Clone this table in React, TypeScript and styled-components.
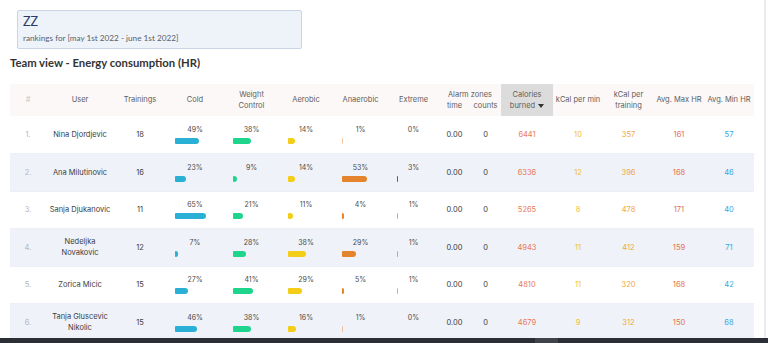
import React from 'react'
import styled, { createGlobalStyle } from 'styled-components'

const GlobalStyle = createGlobalStyle`
  html, body {
    margin: 0;
    padding: 0;
    background: #ffffff;
  }
  body {
    font-family: Lato, "Liberation Sans", sans-serif;
    overflow: hidden;
  }
`

const zoneColors = ['#2bb0d5', '#1fd58e', '#f4cd19', '#e4852d', '#d8234a']

type Row = {
  name: string
  trainings: number
  zones: number[]
  time: string
  counts: number
  calories: number
  perMin: number
  perTraining: number
  maxHr: number
  minHr: number
}

const rows: Row[] = [
  { name: 'Nina Djordjevic', trainings: 18, zones: [49, 38, 14, 1, 0], time: '0.00', counts: 0, calories: 6441, perMin: 10, perTraining: 357, maxHr: 161, minHr: 57 },
  { name: 'Ana Milutinovic', trainings: 16, zones: [23, 9, 14, 53, 3], time: '0.00', counts: 0, calories: 6336, perMin: 12, perTraining: 396, maxHr: 168, minHr: 46 },
  { name: 'Sanja Djukanovic', trainings: 11, zones: [65, 21, 11, 4, 1], time: '0.00', counts: 0, calories: 5265, perMin: 8, perTraining: 478, maxHr: 171, minHr: 40 },
  { name: 'Nedeljka Novakovic', trainings: 12, zones: [7, 28, 38, 29, 1], time: '0.00', counts: 0, calories: 4943, perMin: 11, perTraining: 412, maxHr: 159, minHr: 71 },
  { name: 'Zorica Micic', trainings: 15, zones: [27, 41, 29, 5, 1], time: '0.00', counts: 0, calories: 4810, perMin: 11, perTraining: 320, maxHr: 168, minHr: 42 },
  { name: 'Tanja Gluscevic Nikolic', trainings: 15, zones: [46, 38, 16, 1, 0], time: '0.00', counts: 0, calories: 4679, perMin: 9, perTraining: 312, maxHr: 150, minHr: 68 },
]

const colWidths = [36, 68, 52, 58, 55, 54, 55, 51, 31, 31, 52, 50, 51, 50, 50]

const Page = styled.div`
  display: flex;
  width: 768px;
  height: 343px;
  overflow: hidden;
`
const Main = styled.div`
  flex: 1;
  min-width: 0;
  padding: 10px 0 0 10px;
`
const Gutter = styled.div`
  width: 2px;
  border-left: 2px solid #ebebeb;
`
const InfoBox = styled.div`
  box-sizing: border-box;
  width: 285px;
  height: 39px;
  margin-left: 7px;
  padding: 3px 5px 0;
  background: #eef3fa;
  border: 1px solid #c9d5e4;
  border-radius: 2px;
`
const TeamName = styled.div`
  font-size: 12.5px;
  line-height: 16px;
  color: #2c3c69;
`
const RangeText = styled.div`
  margin-top: 3px;
  font-size: 8.2px;
  line-height: 10px;
  color: #5a5f68;
`
const Title = styled.div`
  margin-top: 6px;
  font-size: 11.3px;
  line-height: 15px;
  font-weight: 700;
  color: #333333;
`
const Table = styled.table`
  margin-top: 14px;
  width: 744px;
  table-layout: fixed;
  border-collapse: collapse;
  font-family: Inter, "Liberation Sans", sans-serif;
  font-size: 7.5px;
`
const HeadRow = styled.tr`
  height: 16px;
  background: #fcf8f7;
`
const Th = styled.th<{ $active?: boolean; $align?: 'top' | 'bottom' | 'middle' }>`
  padding: 0 1px;
  font-weight: 400;
  line-height: 11.5px;
  color: #5e5e5e;
  text-align: center;
  vertical-align: ${p => p.$align || 'middle'};
  background: ${p => (p.$active ? '#dcdcdc' : 'transparent')};
`
const BodyRow = styled.tr<{ $shaded: boolean }>`
  height: 37.5px;
  background: ${p => (p.$shaded ? '#eff2f8' : '#ffffff')};
  border-bottom: 1px solid #eceff5;
`
const Td = styled.td<{ $color?: string }>`
  padding: 0 3px;
  text-align: center;
  vertical-align: middle;
  line-height: 11px;
  color: ${p => p.$color || '#3d3d3d'};
`
const IndexCell = styled(Td)`
  color: #b8b8b8;
`
const PctLabel = styled.div`
  font-size: 7px;
  line-height: 9px;
  color: #4a4a4a;
  text-align: center;
`
const Bar = styled.div<{ $color: string }>`
  height: 6px;
  margin: 4px 0 0 6px;
  border-radius: 1px 3px 3px 1px;
  background: ${p => p.$color};
`
const SortArrow = styled.svg`
  width: 6px;
  height: 4px;
  margin-left: 3px;
  vertical-align: middle;
`
const TaskBar = styled.div`
  position: fixed;
  left: 0;
  right: 0;
  bottom: 0;
  height: 5px;
  padding-left: 535px;
  background: #2b2e34;
`
const TaskItem = styled.div`
  width: 23px;
  height: 5px;
  background: #40434a;
`

const ZoneCell: React.FC<{ pct: number; color: string }> = ({ pct, color }) => {
  const w = pct * 0.48
  const style = pct === 0 ? { width: 0 } : w < 1 ? { width: 1, opacity: 0.45 } : { width: w }
  return (
    <Td>
      <PctLabel>{pct}%</PctLabel>
      <Bar $color={color} style={style} />
    </Td>
  )
}

const App: React.FC = () => {
  return (
    <Page>
      <GlobalStyle />
      <Main>
        <InfoBox>
          <TeamName>ZZ</TeamName>
          <RangeText>rankings for [may 1st 2022 - june 1st 2022]</RangeText>
        </InfoBox>
        <Title>Team view - Energy consumption (HR)</Title>
        <Table>
          <colgroup>
            {colWidths.map((w, i) => (
              <col key={i} style={{ width: w }} />
            ))}
          </colgroup>
          <thead>
            <HeadRow>
              <Th rowSpan={2} style={{ color: '#c4c4c4' }}>#</Th>
              <Th rowSpan={2}>User</Th>
              <Th rowSpan={2}>Trainings</Th>
              <Th rowSpan={2}>Cold</Th>
              <Th rowSpan={2}>Weight<br />Control</Th>
              <Th rowSpan={2}>Aerobic</Th>
              <Th rowSpan={2}>Anaerobic</Th>
              <Th rowSpan={2}>Extreme</Th>
              <Th colSpan={2} $align="bottom">Alarm zones</Th>
              <Th rowSpan={2} $active>
                Calories<br />burned
                <SortArrow viewBox="0 0 6 4">
                  <path d="M0 0h6L3 4z" fill="#333" />
                </SortArrow>
              </Th>
              <Th rowSpan={2}>kCal per min</Th>
              <Th rowSpan={2}>kCal per<br />training</Th>
              <Th rowSpan={2}>Avg. Max HR</Th>
              <Th rowSpan={2}>Avg. Min HR</Th>
            </HeadRow>
            <HeadRow>
              <Th $align="top">time</Th>
              <Th $align="top">counts</Th>
            </HeadRow>
          </thead>
          <tbody>
            {rows.map((r, i) => (
              <BodyRow key={r.name} $shaded={i % 2 === 1}>
                <IndexCell>{i + 1}.</IndexCell>
                <Td>{r.name}</Td>
                <Td>{r.trainings}</Td>
                {r.zones.map((z, k) => (
                  <ZoneCell key={k} pct={z} color={zoneColors[k]} />
                ))}
                <Td>{r.time}</Td>
                <Td>{r.counts}</Td>
                <Td $color="#e7795b">{r.calories}</Td>
                <Td $color="#f2bd2a">{r.perMin}</Td>
                <Td $color="#f0a73a">{r.perTraining}</Td>
                <Td $color="#e4704f">{r.maxHr}</Td>
                <Td $color="#33a8e2">{r.minHr}</Td>
              </BodyRow>
            ))}
          </tbody>
        </Table>
      </Main>
      <Gutter />
      <TaskBar>
        <TaskItem />
      </TaskBar>
    </Page>
  )
}

export default App
